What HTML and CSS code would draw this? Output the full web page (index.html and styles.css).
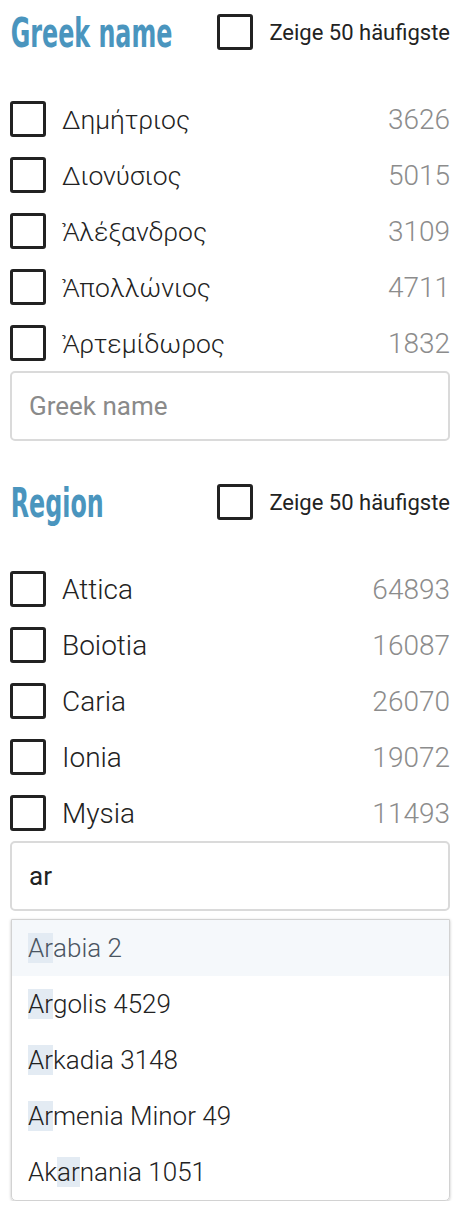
FILE: index.html
```html
<!DOCTYPE html>
<html>
<head>
<meta charset="utf-8">
<link rel="stylesheet" href="styles.css">
</head>
<body>
<div class="page">
  <section class="facet">
    <div class="facet-head">
      <h2 class="facet-title">Greek name</h2>
      <label class="top-toggle"><span class="box"></span><span>Zeige 50 häufigste</span></label>
    </div>
    <ul class="options greek">
      <li class="option"><span class="box"></span><span class="name">Δημήτριος</span><span class="count">3626</span></li>
      <li class="option"><span class="box"></span><span class="name">Διονύσιος</span><span class="count">5015</span></li>
      <li class="option"><span class="box"></span><span class="name">Ἀλέξανδρος</span><span class="count">3109</span></li>
      <li class="option"><span class="box"></span><span class="name">Ἀπολλώνιος</span><span class="count">4711</span></li>
      <li class="option"><span class="box"></span><span class="name">Ἀρτεμίδωρος</span><span class="count">1832</span></li>
    </ul>
    <div class="search"><span class="placeholder">Greek name</span></div>
  </section>

  <section class="facet">
    <div class="facet-head">
      <h2 class="facet-title">Region</h2>
      <label class="top-toggle"><span class="box"></span><span>Zeige 50 häufigste</span></label>
    </div>
    <ul class="options">
      <li class="option"><span class="box"></span><span class="name">Attica</span><span class="count">64893</span></li>
      <li class="option"><span class="box"></span><span class="name">Boiotia</span><span class="count">16087</span></li>
      <li class="option"><span class="box"></span><span class="name">Caria</span><span class="count">26070</span></li>
      <li class="option"><span class="box"></span><span class="name">Ionia</span><span class="count">19072</span></li>
      <li class="option"><span class="box"></span><span class="name">Mysia</span><span class="count">11493</span></li>
    </ul>
    <div class="search"><span class="value">ar</span></div>
    <ul class="suggestions">
      <li class="suggestion active"><mark>Ar</mark>abia 2</li>
      <li class="suggestion"><mark>Ar</mark>golis 4529</li>
      <li class="suggestion"><mark>Ar</mark>kadia 3148</li>
      <li class="suggestion"><mark>Ar</mark>menia Minor 49</li>
      <li class="suggestion">Ak<mark>ar</mark>nania 1051</li>
    </ul>
  </section>
</div>
</body>
</html>
```

FILE: styles.css
```css
* { box-sizing: border-box; }
html, body { margin: 0; padding: 0; background: #fff; }
body { font-family: Roboto, "Noto Sans", sans-serif; color: #222; }
.page { width: 440px; margin-left: 10px; }

.facet + .facet { margin-top: 29px; }

.facet-head {
  height: 64px;
  display: flex;
  align-items: center;
  justify-content: space-between;
  margin-bottom: 27px;
}
.facet-title {
  flex: 1;
  min-width: 0;
  margin: 0;
  padding-left: 1px;
  font-family: "DejaVu Sans Condensed", sans-serif;
  font-weight: 700;
  font-size: 36px;
  color: #4a95be;
  transform: scale(0.735, 1.12);
  transform-origin: left center;
  white-space: nowrap;
}
.top-toggle {
  flex: none;
  white-space: nowrap;
  display: flex;
  align-items: center;
  gap: 16px;
  font-size: 22px;
  color: #222;
}

.box {
  flex: none;
  width: 36px;
  height: 36px;
  border: 3px solid #222;
  border-radius: 3px;
  background: #fff;
}

.options { list-style: none; margin: 0; padding: 0; }
.option {
  height: 56px;
  display: flex;
  align-items: center;
}
.option .name {
  margin-left: 16px;
  flex: 1;
  font-size: 28px;
  font-weight: 300;
  color: #222;
}
.greek .option .name { font-size: 26.5px; }
.option .count {
  font-size: 28px;
  font-weight: 300;
  color: #8c8c8c;
}

.search {
  height: 70px;
  border: 2px solid #dadada;
  border-radius: 5px;
  display: flex;
  align-items: center;
  padding-left: 17px;
  font-size: 26px;
}
.placeholder { color: #8a8a8a; }
.value { color: #222; }

.suggestions {
  list-style: none;
  margin: 8px 0 0 1px;
  padding: 0;
  width: 439px;
  border: 1px solid #d2d2d2;
  border-radius: 0 0 5px 5px;
  box-shadow: 0 1px 3px rgba(0,0,0,0.25);
}
.suggestion {
  height: 56px;
  display: flex;
  align-items: center;
  padding-left: 16px;
  font-size: 26px;
  font-weight: 300;
  color: #222;
  white-space: pre;
}
.suggestion.active { background: #f5f8fb; color: #4a5562; }
.suggestion mark {
  background: #e3ebf3;
  color: inherit;
}
```
